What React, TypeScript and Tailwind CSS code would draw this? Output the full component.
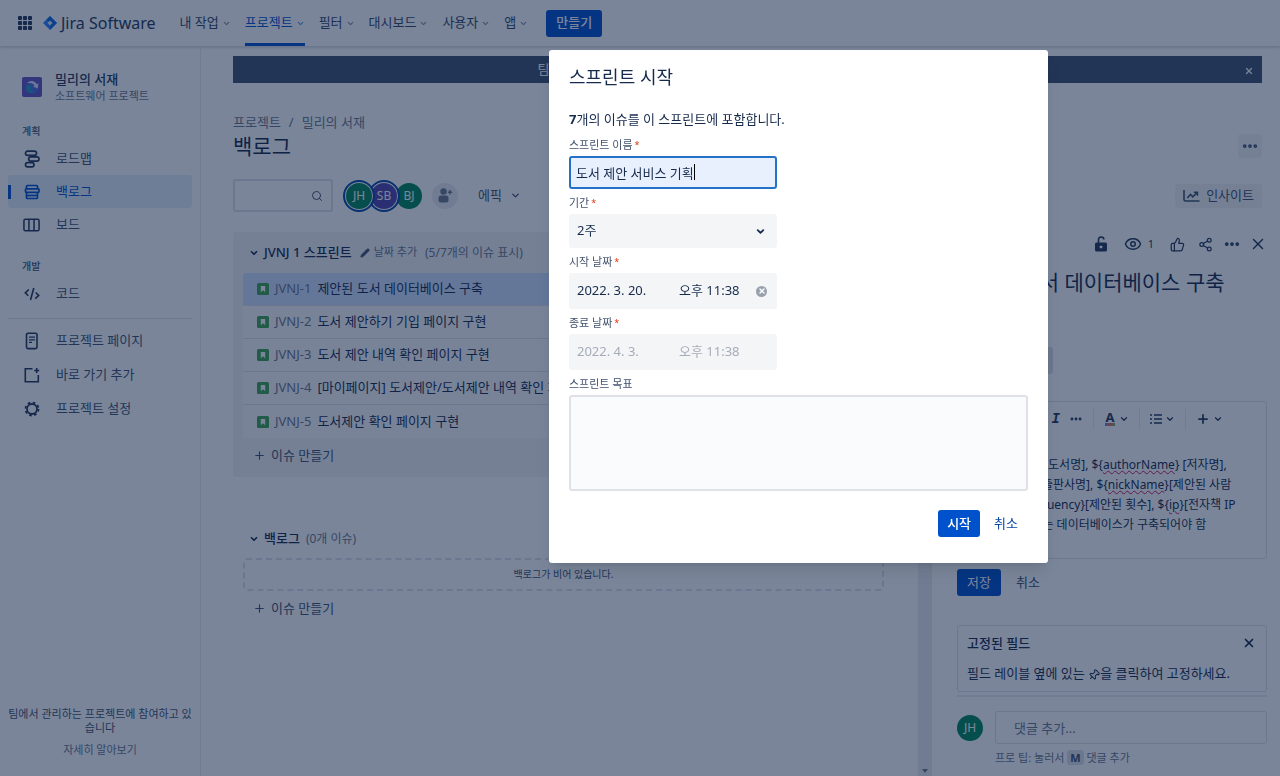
import * as React from "react";
import {
  ChevronDown,
  Ellipsis,
  Eye,
  Pencil,
  Pin,
  Plus,
  Search,
  Share2,
  ThumbsUp,
  X,
} from "lucide-react";

const navItems = ["내 작업", "프로젝트", "필터", "대시보드", "사용자", "앱"];

const issues = [
  { id: "JVNJ-1", title: "제안된 도서 데이터베이스 구축" },
  { id: "JVNJ-2", title: "도서 제안하기 기입 페이지 구현" },
  { id: "JVNJ-3", title: "도서 제안 내역 확인 페이지 구현" },
  { id: "JVNJ-4", title: "[마이페이지] 도서제안/도서제안 내역 확인 페이지 구현" },
  { id: "JVNJ-5", title: "도서제안 확인 페이지 구현" },
];

function AppSwitcherIcon() {
  return (
    <svg width="14" height="14" viewBox="0 0 14 14" fill="currentColor" aria-hidden>
      {[0, 5, 10].map((y) =>
        [0, 5, 10].map((x) => <rect key={`${x}-${y}`} x={x} y={y} width="4" height="4" rx="0.8" />)
      )}
    </svg>
  );
}

function JiraLogo() {
  return (
    <svg width="14" height="14" viewBox="0 0 14 14" aria-hidden>
      <path d="M7 0 14 7 7 14 0 7Z" fill="#2684ff" />
      <path d="M7 0 3.5 3.5 7 7V4.6L9.4 7 7 9.4V14L14 7Z" fill="#0052cc" opacity="0.55" />
      <path d="M7 4.4 9.6 7 7 9.6 4.4 7Z" fill="#deebff" />
    </svg>
  );
}

function ProjectAvatar() {
  return (
    <svg width="20" height="20" viewBox="0 0 20 20" className="shrink-0" aria-hidden>
      <rect width="20" height="20" rx="2" fill="#6554c0" />
      <circle cx="10.5" cy="10.5" r="6" fill="#4c6fd8" />
      <path d="M4.500 8c-2 5 2 9.500 8 8-3-1-5-3-4-7z" fill="#1f9fc4" />
      <path d="M5 6.500c3-3.500 7.500-3 9.500.5l2-.5-.8 5-4.700-2 1.700-1C11 6.300 8 5.500 5 6.500z" fill="#e6e0ff" />
    </svg>
  );
}

function RoadmapIcon() {
  return (
    <svg width="16" height="18" viewBox="0 0 16 18" fill="none" stroke="currentColor" strokeWidth="1.700" aria-hidden>
      <rect x="1.500" y="1.200" width="11" height="4.200" rx="2.100" />
      <rect x="4.700" y="6.900" width="10.300" height="4.200" rx="2.100" />
      <rect x="1.500" y="12.600" width="8.500" height="4.200" rx="2.100" />
      <path d="M10 5.400 11.500 6.900M8 11.100 7 12.600" />
    </svg>
  );
}

function BacklogIcon() {
  return (
    <svg width="16" height="16" viewBox="0 0 16 16" fill="none" stroke="currentColor" strokeWidth="1.700" aria-hidden>
      <path d="M2.500 4.800V2.500q0-1 1-1h9q1 0 1 1v2.300M2.500 8.500v5q0 1 1 1h9q1 0 1-1v-5" />
      <path d="M2.500 11.500h11" />
      <rect x="1.500" y="4.800" width="13.500" height="3.500" rx="0.800" />
    </svg>
  );
}

function BoardIcon() {
  return (
    <svg width="18" height="14" viewBox="0 0 18 14" fill="none" stroke="currentColor" strokeWidth="1.600" aria-hidden>
      <rect x="1" y="1" width="16" height="12" rx="1.500" />
      <path d="M6.300 1v12M11.700 1v12" />
    </svg>
  );
}

function CodeIcon() {
  return (
    <svg width="16" height="14" viewBox="0 0 16 14" fill="none" stroke="currentColor" strokeWidth="1.600" aria-hidden>
      <path d="M4.800 2.500 1.300 5.800l3 3M9.800 1 6.500 13M11.700 5.500l3 3-3.500 3.200" />
    </svg>
  );
}

function PageIcon() {
  return (
    <svg width="14" height="18" viewBox="0 0 14 18" fill="none" stroke="currentColor" strokeWidth="1.600" aria-hidden>
      <rect x="1.500" y="1.300" width="10.500" height="15.300" rx="1.500" />
      <path d="M4 5.200h6M4 7.800h6M4 10.400h3" strokeWidth="1.300" />
    </svg>
  );
}

function ShortcutIcon() {
  return (
    <svg width="16" height="16" viewBox="0 0 16 16" fill="none" stroke="currentColor" strokeWidth="1.600" aria-hidden>
      <path d="M8.500 1.800H1.300v13h13V8" />
      <path d="M12.700 1v5M10.200 3.500h5" />
    </svg>
  );
}

function GearIcon() {
  return (
    <svg width="16" height="16" viewBox="0 0 16 16" fill="none" stroke="currentColor" aria-hidden>
      <circle cx="8" cy="8" r="5" strokeWidth="1.800" />
      <circle cx="8" cy="8" r="6.500" strokeWidth="1.800" strokeDasharray="2.600 2.505" />
    </svg>
  );
}

function StoryIcon() {
  return (
    <svg width="12" height="12" viewBox="0 0 12 12" className="shrink-0" aria-hidden>
      <rect width="12" height="12" rx="1.500" fill="#3fa34d" />
      <path d="M3.800 3h4.400v6.200L6 7.200 3.800 9.200z" fill="#fff" />
    </svg>
  );
}

function InsightsIcon() {
  return (
    <svg width="17" height="14" viewBox="0 0 17 14" fill="none" stroke="currentColor" strokeWidth="1.600" aria-hidden>
      <path d="M1 1v9.500q0 1.500 1.500 1.500H16.500" />
      <path d="M4.300 9 7.500 5.500l2.300 2.300 4-4M10.800 3.200h3.600v3.500" />
    </svg>
  );
}

function UnlockIcon() {
  return (
    <svg width="14" height="16" viewBox="0 0 14 16" aria-hidden>
      <rect x="1" y="6.500" width="12" height="9" rx="1.500" fill="currentColor" />
      <path d="M4.500 7V3.800a2.700 2.700 0 0 1 5.400-.3" fill="none" stroke="currentColor" strokeWidth="1.600" />
      <rect x="5.700" y="9.700" width="2.600" height="2.600" rx="0.500" fill="#fff" />
    </svg>
  );
}

function BulletListIcon() {
  return (
    <svg width="12" height="12" viewBox="0 0 12 12" stroke="currentColor" strokeWidth="1.600" aria-hidden>
      <path d="M0 2h2M0 6h2M0 10h2M4 2h8M4 6h8M4 10h8" />
    </svg>
  );
}

function AddPersonIcon() {
  return (
    <svg width="15" height="15" viewBox="0 0 15 15" fill="currentColor" aria-hidden>
      <circle cx="5.500" cy="3.500" r="3.200" />
      <rect x="0.500" y="7.500" width="10" height="7" rx="2.500" />
      <path d="M11.300 2h1.400v1.500h1.500v1.400h-1.500v1.500h-1.400V4.900H9.900V3.500h1.400z" />
    </svg>
  );
}

function NavLink({ label, active }: { label: string; active: boolean }) {
  return (
    <a
      href="#"
      className={
        "flex h-full items-center gap-[3px] border-b-[3px] border-t-[3px] border-t-transparent " +
        (active ? "border-b-[#0052cc] text-[#0052cc]" : "border-b-transparent text-[#344563]")
      }
    >
      {label}
      <ChevronDown size={9} strokeWidth={3} className="opacity-60" />
    </a>
  );
}

function TopBar() {
  return (
    <header className="flex h-[47px] shrink-0 items-center border-b border-[#dfe1e6] pl-[18px] text-[13px] shadow-sm">
      <button aria-label="앱 전환" className="text-[#253858]">
        <AppSwitcherIcon />
      </button>
      <a href="#" className="ml-[11px] flex items-center gap-1 text-[16px] leading-5 text-[#253858]">
        <JiraLogo />
        Jira Software
      </a>
      <nav className="ml-6 flex h-full items-center gap-[14px]">
        {navItems.map((label) => (
          <NavLink key={label} label={label} active={label === "프로젝트"} />
        ))}
      </nav>
      <button className="ml-[18px] h-[27px] rounded-[3px] bg-[#0052cc] px-[10px] font-medium text-white">
        만들기
      </button>
    </header>
  );
}

function SideLink({
  icon,
  label,
  active,
}: {
  icon: React.ReactNode;
  label: string;
  active?: boolean;
}) {
  return (
    <a
      href="#"
      className={
        "flex h-[33px] items-center rounded-[3px] " +
        (active ? "bg-[#e4effb] text-[#0052cc]" : "text-[#42526e]")
      }
    >
      <span className={"h-[14px] w-[3px] " + (active ? "bg-[#0052cc]" : "")} />
      <span className={"ml-3 mr-4 flex w-[17px] justify-center " + (active ? "" : "text-[#253858]")}>{icon}</span>
      {label}
    </a>
  );
}

function Sidebar() {
  return (
    <aside className="flex w-[201px] shrink-0 flex-col border-r border-[#ebecf0] px-2 text-[13px]">
      <div className="mt-[23px] flex items-center gap-[13px] pl-[14px]">
        <ProjectAvatar />
        <div>
          <div className="font-medium leading-[18px] text-[#253858]">밀리의 서재</div>
          <div className="text-[11px] leading-4 text-[#6b778c]">소프트웨어 프로젝트</div>
        </div>
      </div>

      <div className="mb-1 mt-5 pl-[14px] text-[10px] font-medium leading-[14px] text-[#42526e]">계획</div>
      <div className="flex flex-col">
        <SideLink icon={<RoadmapIcon />} label="로드맵" />
        <SideLink icon={<BacklogIcon />} label="백로그" active />
        <SideLink icon={<BoardIcon />} label="보드" />
      </div>

      <div className="mb-1 mt-[18px] pl-[14px] text-[10px] font-medium leading-[14px] text-[#42526e]">개발</div>
      <SideLink icon={<CodeIcon />} label="코드" />

      <div className="mt-2 flex flex-col gap-px border-t border-[#dfe1e6] pt-[5px]">
        <SideLink icon={<PageIcon />} label="프로젝트 페이지" />
        <SideLink icon={<ShortcutIcon />} label="바로 가기 추가" />
        <SideLink icon={<GearIcon />} label="프로젝트 설정" />
      </div>

      <div className="mb-[19px] mt-auto text-center text-[11px] leading-[14px]">
        <p className="text-[#42526e]">팀에서 관리하는 프로젝트에 참여하고 있습니다</p>
        <a href="#" className="mt-2 block text-[#6b778c]">
          자세히 알아보기
        </a>
      </div>
    </aside>
  );
}

function Avatar({ initials, color, ring }: { initials: string; color: string; ring?: boolean }) {
  return (
    <span
      className={
        "flex size-[26px] shrink-0 items-center justify-center rounded-full text-[12px] text-white " +
        color +
        (ring ? " ring-1 ring-white outline-2 outline-offset-1 outline-[#0747a6]" : "")
      }
    >
      {initials}
    </span>
  );
}

function PageHeader() {
  return (
    <div className="pl-8 pr-[18px] pt-[9px]">
      <div className="relative flex h-[27px] items-center justify-center bg-[#42526e] text-[13px] text-white">
        팀에서 관리하는 프로젝트에 참여하고 있습니다. 새 기능에 의견을 보내 주세요.
        <button aria-label="배너 닫기" className="absolute right-2 top-[10px]">
          <X size={10} strokeWidth={3} />
        </button>
      </div>

      <div className="mt-[30px] flex gap-2 text-[13px] leading-[18px] text-[#6b778c]">
        <a href="#">프로젝트</a>
        <span>/</span>
        <a href="#">밀리의 서재</a>
      </div>
      <div className="flex h-[30px] items-center justify-between">
        <h1 className="text-[21px] leading-7 text-[#172b4d]">백로그</h1>
        <button aria-label="더 보기" className="flex size-6 items-center justify-center rounded-[3px] bg-[#f4f5f7] text-[#42526e]">
          <Ellipsis size={18} strokeWidth={3} />
        </button>
      </div>

      <div className="mt-[18px] flex h-[33px] items-center">
        <div className="flex h-full w-[100px] items-center rounded-[3px] border-2 border-[#dfe1e6] px-2">
          <input aria-label="백로그 검색" className="w-full min-w-0 bg-transparent text-[13px] outline-none" />
          <Search size={12} className="shrink-0 text-[#42526e]" />
        </div>
        <div className="isolate ml-[13px] flex items-center -space-x-px">
          <span className="relative z-20">
            <Avatar initials="JH" color="bg-[#00875a]" ring />
          </span>
          <span className="relative z-10">
            <Avatar initials="SB" color="bg-[#5243aa]" ring />
          </span>
          <Avatar initials="BJ" color="bg-[#00875a]" />
        </div>
        <button
          aria-label="사용자 추가"
          className="ml-[10px] flex size-[26px] items-center justify-center rounded-full bg-[#ebecf0] text-[#6b778c]"
        >
          <AddPersonIcon />
        </button>
        <button className="ml-5 flex items-center gap-2 text-[13px] text-[#42526e]">
          에픽
          <ChevronDown size={11} strokeWidth={3} />
        </button>
        <button className="ml-auto flex h-6 items-center gap-[6px] rounded-[3px] bg-[#f4f5f7] px-2 text-[13px] text-[#42526e]">
          <InsightsIcon />
          인사이트
        </button>
      </div>
    </div>
  );
}

function Backlog() {
  return (
    <div className="min-w-0 flex-1 overflow-hidden pl-8 pr-6 text-[13px]">
      <section className="rounded-[3px] bg-[#f4f5f7] px-[10px]">
        <div className="flex h-[41px] items-center whitespace-nowrap">
          <ChevronDown size={10} strokeWidth={4} className="ml-[6px] text-[#172b4d]" />
          <h2 className="ml-[5px] font-medium text-[#172b4d]">JVNJ 1 스프린트</h2>
          <button className="ml-2 flex items-center gap-1 text-[11px] text-[#6b778c]">
            <Pencil size={10} fill="currentColor" className="text-[#42526e]" />
            날짜 추가
          </button>
          <span className="ml-2 text-[12px] text-[#6b778c]">(5/7개의 이슈 표시)</span>
        </div>
        <ul className="divide-y divide-[#dfe1e6] overflow-hidden rounded-[3px]">
          {issues.map((issue, i) => (
            <li
              key={issue.id}
              className={
                "flex h-[33px] items-center gap-[6px] whitespace-nowrap pl-[14px] " +
                (i === 0 ? "bg-[#cfe1ff]" : "bg-[#fafbfc]")
              }
            >
              <StoryIcon />
              <a href="#" className="text-[#6b778c]">{issue.id}</a>
              <span className="text-[#172b4d]">{issue.title}</span>
            </li>
          ))}
        </ul>
        <button className="flex h-[39px] items-start gap-[5px] pl-[10px] pt-[7px] leading-5 text-[#42526e]">
          <Plus size={13} className="mt-1" />
          이슈 만들기
        </button>
      </section>

      <section className="mt-[42px] px-[10px]">
        <div className="flex h-[39px] items-center">
          <ChevronDown size={10} strokeWidth={4} className="ml-[6px] text-[#172b4d]" />
          <h2 className="ml-[5px] font-medium text-[#172b4d]">백로그</h2>
          <span className="ml-[6px] text-[12px] text-[#6b778c]">(0개 이슈)</span>
        </div>
        <p className="flex h-[33px] items-center justify-center rounded-[3px] border-2 border-dashed border-[#dfe1e6] text-[10px] text-[#42526e]">
          백로그가 비어 있습니다.
        </p>
        <button className="mt-[7px] flex items-start gap-[5px] pl-[10px] leading-5 text-[#42526e]">
          <Plus size={13} className="mt-1" />
          이슈 만들기
        </button>
      </section>
    </div>
  );
}

function Misspelled({ children }: { children: React.ReactNode }) {
  return <span className="underline decoration-[#c9185b] decoration-wavy decoration-1">{children}</span>;
}

function IssuePanel() {
  return (
    <div className="flex w-[348px] shrink-0 flex-col overflow-hidden pl-[25px] pr-[13px] text-[13px] text-[#172b4d]">
      <div className="flex h-6 shrink-0 items-center justify-end text-[#253858]">
        <button aria-label="제한">
          <UnlockIcon />
        </button>
        <button className="ml-4 flex items-center gap-[6px] text-[11px]">
          <Eye size={18} />1
        </button>
        <button aria-label="좋아요" className="ml-4">
          <ThumbsUp size={15} />
        </button>
        <button aria-label="공유" className="ml-[13px]">
          <Share2 size={15} />
        </button>
        <button aria-label="더 보기" className="ml-[10px]">
          <Ellipsis size={18} strokeWidth={3} />
        </button>
        <button aria-label="닫기" className="ml-2">
          <X size={18} />
        </button>
      </div>

      <h2 className="mt-3 whitespace-nowrap text-[21px] leading-7">제안된 도서 데이터베이스 구축</h2>
      <div className="mt-[51px] flex gap-2">
        <button className="h-[27px] w-[44px] rounded-[3px] bg-[#dfe1e6]">첨부</button>
        <button className="h-[27px] w-[44px] rounded-[3px] bg-[#dfe1e6]">링크</button>
      </div>

      <div className="mt-[27px] shrink-0 rounded-[3px] border border-[#dfe1e6]">
        <div className="flex h-[34px] items-center justify-end pr-[43px] text-[#253858]">
          <button aria-label="기울임꼴" className="font-mono text-[14px] font-bold italic">
            I
          </button>
          <button aria-label="추가 서식" className="ml-[9px]">
            <Ellipsis size={14} strokeWidth={3} />
          </button>
          <span className="mx-[10px] h-5 w-px bg-[#ebecf0]" />
          <button aria-label="텍스트 색상" className="flex items-center gap-[3px]">
            <span className="flex w-3 flex-col items-center text-[13px] font-bold leading-[11px]">
              A
              <span className="h-[3px] w-[10px] bg-linear-to-r from-[#2684ff] via-[#ff5630] to-[#36b37e]" />
            </span>
            <ChevronDown size={10} strokeWidth={3} />
          </button>
          <span className="mx-[10px] h-5 w-px bg-[#ebecf0]" />
          <button aria-label="목록" className="flex items-center gap-[3px]">
            <BulletListIcon />
            <ChevronDown size={10} strokeWidth={3} />
          </button>
          <span className="mx-[10px] h-5 w-px bg-[#ebecf0]" />
          <button aria-label="삽입" className="flex items-center gap-[3px]">
            <Plus size={14} strokeWidth={3} />
            <ChevronDown size={10} strokeWidth={3} />
          </button>
        </div>
        <div className="whitespace-nowrap px-2 pb-[23px] pt-[19px] text-[12px] leading-5">
          <p>
            {"${bookName}[도서명], ${"}
            <Misspelled>authorName</Misspelled>
            {"} [저자명],"}
          </p>
          <p>
            {"${pubName}[출판사명], ${"}
            <Misspelled>nickName</Misspelled>
            {"}[제안된 사람"}
          </p>
          <p>
            {"의 이름], ${frequency}[제안된 횟수], ${"}
            <Misspelled>ip</Misspelled>
            {"}[전자책 IP"}
          </p>
          <p>주소 정보]를 담는 데이터베이스가 구축되어야 함</p>
        </div>
      </div>

      <div className="mt-[10px] flex items-center gap-[15px]">
        <button className="h-[27px] rounded-[3px] bg-[#0052cc] px-[10px] text-white">저장</button>
        <button className="text-[#42526e]">취소</button>
      </div>

      <div className="mt-[29px] shrink-0 rounded-[3px] border border-[#dfe1e6] px-[9px] py-2">
        <div className="flex items-center justify-between leading-[18px]">
          <h3 className="font-medium">고정된 필드</h3>
          <button aria-label="고정된 필드 닫기" className="mr-[1px]">
            <X size={14} strokeWidth={3} />
          </button>
        </div>
        <p className="mt-[11px] whitespace-nowrap leading-5">
          필드 레이블 옆에 있는 <Pin size={12} className="inline rotate-45" />을 클릭하여 고정하세요.
        </p>
      </div>

      <div className="mt-[3px] flex gap-3 border-t-2 border-[#ebecf0] pt-[14px]">
        <div className="pt-1">
          <Avatar initials="JH" color="bg-[#00875a]" />
        </div>
        <div className="min-w-0 flex-1">
          <input
            aria-label="댓글"
            placeholder="댓글 추가..."
            className="block h-[33px] w-full rounded-[3px] border border-[#dfe1e6] bg-transparent px-[18px] placeholder:text-[#6b778c]"
          />
          <p className="mt-[6px] text-[11px] leading-4 text-[#6b778c]">
            프로 팁: 눌러서 <kbd className="rounded-[3px] bg-[#dfe1e6] px-[3px] font-sans font-bold text-[#42526e]">M</kbd> 댓글 추가
          </p>
        </div>
      </div>
    </div>
  );
}

function FieldLabel({ htmlFor, required, children }: { htmlFor: string; required?: boolean; children: React.ReactNode }) {
  return (
    <label htmlFor={htmlFor} className="mb-1 mt-[7px] flex h-[14px] items-center text-[11px] text-[#42526e]">
      {children}
      {required && <span className="pl-[2px] text-[9px] text-[#de350b]">*</span>}
    </label>
  );
}

function StartSprintDialog() {
  return (
    <div className="fixed inset-0 z-50 flex items-start justify-center bg-[#091e42]/54 pl-[317px] pt-[50px]">
      <div
        role="dialog"
        aria-labelledby="dialog-title"
        className="w-[499px] rounded-[3px] bg-white px-5 pb-[26px] pt-[15px] text-[13px] text-[#172b4d] shadow-lg"
      >
        <h2 id="dialog-title" className="text-[18px] leading-6">스프린트 시작</h2>
        <p className="mb-[9px] mt-5 leading-5">
          <b>7</b>개의 이슈를 이 스프린트에 포함합니다.
        </p>

        <div className="w-[208px]">
          <FieldLabel htmlFor="sprint-name" required>스프린트 이름</FieldLabel>
          <div className="relative">
            <input
              id="sprint-name"
              defaultValue="도서 제안 서비스 기획"
              className="block h-[33px] w-full rounded-[3px] border-2 border-[#2471c8] bg-[#e8f0fe] px-[5px] outline-none"
            />
            <span className="absolute left-[125px] top-2 h-4 w-px bg-black" />
          </div>

          <FieldLabel htmlFor="sprint-length" required>기간</FieldLabel>
          <div className="relative">
            <select
              id="sprint-length"
              defaultValue="2주"
              className="block h-[34px] w-full appearance-none rounded-[3px] bg-[#f4f5f7] px-2 outline-none"
            >
              <option>1주</option>
              <option>2주</option>
              <option>3주</option>
              <option>4주</option>
            </select>
            <ChevronDown size={11} strokeWidth={4} className="pointer-events-none absolute right-[11px] top-3" />
          </div>

          <FieldLabel htmlFor="start-date" required>시작 날짜</FieldLabel>
          <div className="flex h-9 items-center rounded-[3px] bg-[#f4f5f7] px-2">
            <input id="start-date" defaultValue="2022. 3. 20." className="w-[102px] bg-transparent outline-none" />
            <input aria-label="시작 시간" defaultValue="오후 11:38" className="w-[77px] bg-transparent outline-none" />
            <button
              aria-label="시작 날짜 지우기"
              className="flex size-[11px] items-center justify-center rounded-full bg-[#97a0af] text-white"
            >
              <X size={8} strokeWidth={4} />
            </button>
          </div>

          <FieldLabel htmlFor="end-date" required>종료 날짜</FieldLabel>
          <div className="flex h-9 items-center rounded-[3px] bg-[#f4f5f7] px-2 text-[#a5adba]">
            <input id="end-date" disabled defaultValue="2022. 4. 3." className="w-[102px] bg-transparent" />
            <input aria-label="종료 시간" disabled defaultValue="오후 11:38" className="w-[77px] bg-transparent" />
          </div>
        </div>

        <FieldLabel htmlFor="sprint-goal">스프린트 목표</FieldLabel>
        <textarea
          id="sprint-goal"
          className="block h-24 w-full resize-none rounded-[3px] border-2 border-[#dfe1e6] bg-[#fafbfc] p-2 outline-none"
        />

        <div className="mt-[19px] flex items-center justify-end gap-[14px] pr-[10px]">
          <button className="h-[27px] rounded-[3px] bg-[#0052cc] px-[9px] font-medium text-white">시작</button>
          <button className="text-[#0747a6]">취소</button>
        </div>
      </div>
    </div>
  );
}

export default function App() {
  return (
    <div className="flex h-screen flex-col overflow-hidden bg-white font-['Noto_Sans','Noto_Sans_CJK_KR',sans-serif]">
      <TopBar />
      <div className="flex min-h-0 flex-1">
        <Sidebar />
        <main className="flex min-w-0 flex-1 flex-col">
          <PageHeader />
          <div className="mt-5 flex min-h-0 flex-1">
            <Backlog />
            <div className="flex w-[14px] shrink-0 items-end justify-center bg-[#ebecf0] pb-[3px]">
              <svg width="6" height="4" viewBox="0 0 6 4" fill="#6b778c" aria-hidden>
                <path d="M0 0h6L3 4z" />
              </svg>
            </div>
            <IssuePanel />
          </div>
        </main>
      </div>
      <StartSprintDialog />
    </div>
  );
}
